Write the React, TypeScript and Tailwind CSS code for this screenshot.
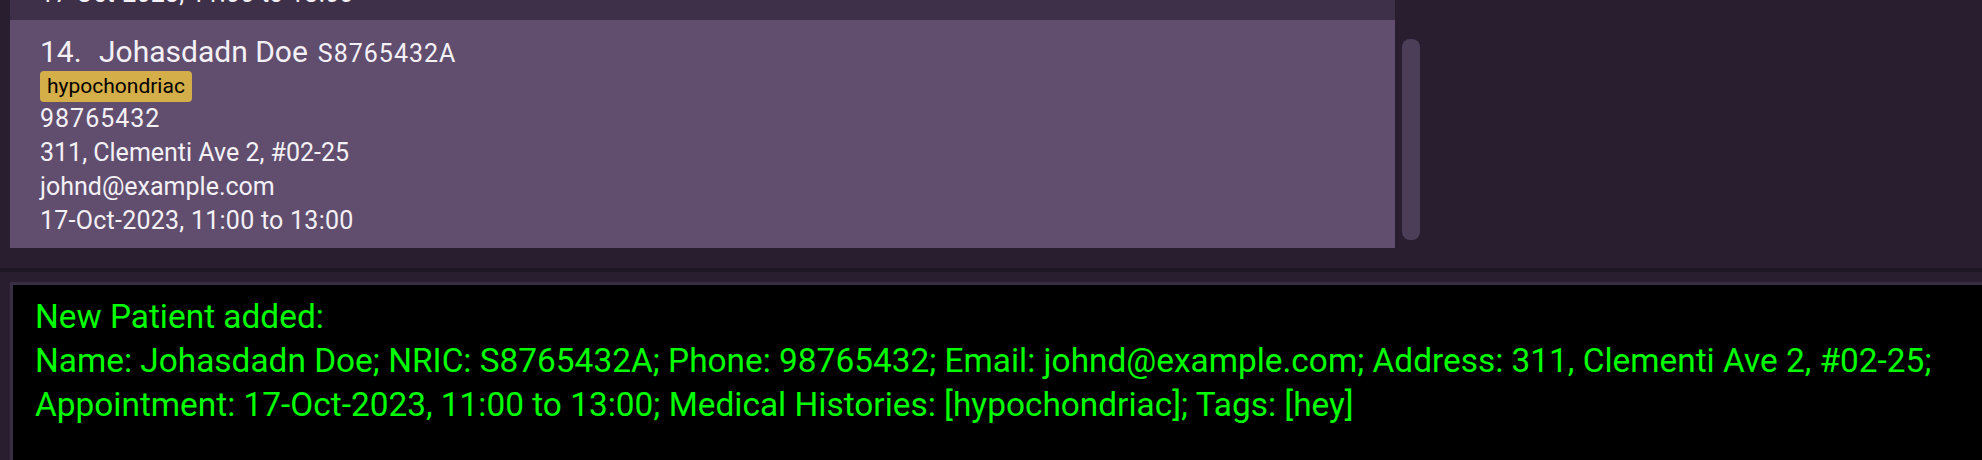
import React from "react";

const patient = {
  index: 14,
  name: "Johasdadn Doe",
  nric: "S8765432A",
  histories: ["hypochondriac"],
  phone: "98765432",
  address: "311, Clementi Ave 2, #02-25",
  email: "johnd@example.com",
  appointment: "17-Oct-2023, 11:00 to 13:00",
};

const font = { fontFamily: "Roboto, 'Liberation Sans', sans-serif" };

function PatientCard() {
  return (
    <div className="h-[228px] bg-[#614e6f] pl-[30px] pt-[14px] text-[#f4f1f6]">
      <div className="flex items-baseline h-[36px] leading-[36px]">
        <span className="text-[30px] w-[59px]">{patient.index}.</span>
        <span className="text-[30px]">{patient.name}</span>
        <span className="text-[25px] tracking-[1px] ml-[10px]">{patient.nric}</span>
      </div>
      <div className="flex gap-2 mt-[1px]">
        {patient.histories.map((h) => (
          <span
            key={h}
            className="h-[31px] leading-[31px] px-[7px] rounded-[4px] bg-[#d4ae48] text-black text-[21px]"
          >
            {h}
          </span>
        ))}
      </div>
      <div className="text-[25px] leading-[34px]">
        <div className="tracking-[1px]">{patient.phone}</div>
        <div>{patient.address}</div>
        <div>{patient.email}</div>
        <div className="tracking-[0.25px]">{patient.appointment}</div>
      </div>
    </div>
  );
}

export default function App() {
  return (
    <div style={font} className="w-[1982px] h-[460px] bg-[#291e2f] flex flex-col overflow-hidden">
      {/* list */}
      <div className="h-[268px] flex shrink-0">
        <div className="w-[1395px] pl-[10px] flex flex-col">
          {/* previous card, only bottom part visible */}
          <div className="h-[20px] bg-[#3e3049] overflow-hidden flex flex-col justify-end pl-[30px] pb-[9px] text-[#f4f1f6]">
            <div className="text-[25px] leading-[34px] tracking-[0.25px] shrink-0">{patient.appointment}</div>
          </div>
          <PatientCard />
        </div>
        <div className="pl-[7px] pt-[39px]">
          <div className="w-[18px] h-[201px] rounded-[8px] bg-[#4c3e58]" />
        </div>
      </div>
      <div className="h-[4px] bg-[#1f1726] shrink-0" />
      <div className="h-[10px] shrink-0" />
      {/* result box */}
      <div className="flex-1 ml-[10px] border-l-[3px] border-t-[3px] border-[#3a2e45] bg-black pl-[22px] pt-[10px] text-[33.4px] leading-[44px] text-[#00ff00]">
        <div>New Patient added:</div>
        <div>
          Name: {patient.name}; NRIC: {patient.nric}; Phone: {patient.phone}; Email: {patient.email}; Address:{" "}
          {patient.address};
        </div>
        <div>
          Appointment: {patient.appointment}; Medical Histories: [{patient.histories.join(", ")}]; Tags: [hey]
        </div>
      </div>
    </div>
  );
}
